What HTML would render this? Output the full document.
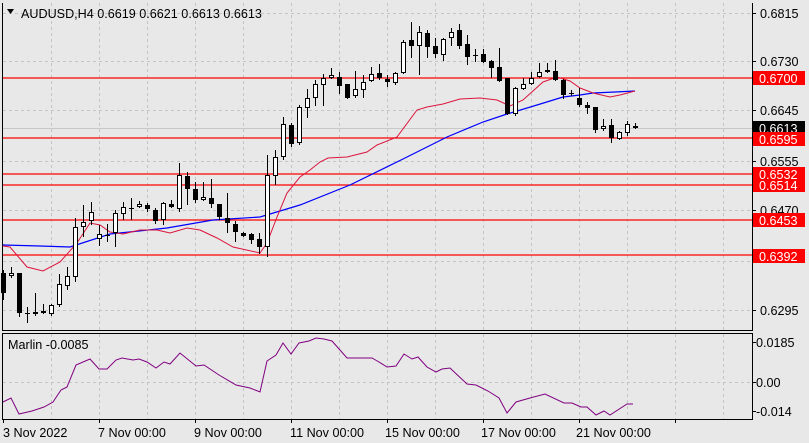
<!DOCTYPE html>
<html><head><meta charset="utf-8">
<style>
html,body{margin:0;padding:0;background:#e8e8e8;}
body{width:809px;height:443px;overflow:hidden;position:relative;font-family:"Liberation Sans",sans-serif;}
svg{position:absolute;left:0;top:0;}
</style></head>
<body>
<svg id="s" width="809" height="443" xmlns="http://www.w3.org/2000/svg" font-family="Liberation Sans, sans-serif" font-size="12.6">
<rect x="0" y="0" width="809" height="443" fill="#e8e8e8"/>
<g id="grid" stroke="#c4c4c4" stroke-dasharray="3,3" stroke-width="1"></g>
<line x1="3" y1="128.5" x2="752" y2="128.5" stroke="#c8c8c8"/>
<g stroke="#ff0000" stroke-width="1.3">
<line x1="3" y1="78" x2="752" y2="78"/>
<line x1="3" y1="138" x2="752" y2="138"/>
<line x1="3" y1="174" x2="752" y2="174"/>
<line x1="3" y1="185" x2="752" y2="185"/>
<line x1="3" y1="220" x2="752" y2="220"/>
<line x1="3" y1="255" x2="752" y2="255"/>
</g>
<polyline fill="none" stroke="#0000ff" stroke-width="1.2" points="3,245 40,246 70,247 110,234 167,228 213,220 260,217 300,205 350,185 403,159 447,137 483,122 507,114 537,105 563,97 580,95 593,93 615,92 635,91"/>
<polyline fill="none" stroke="#dc143c" stroke-width="1" points="3,246 10,247 27,267 43,271 60,262 77,243 90,223 100,225 110,232 123,234 140,230 157,230 170,233 187,228 200,230 217,238 233,247 260,253 267,243 277,217 287,193 300,177 310,170 320,162 328,158 347,157 367,152 377,145 397,137 417,110 427,107 443,104 460,99 480,98 497,100 510,106 523,100 543,82 557,77 570,81 580,88 593,93 610,97 620,95 635,91"/>
<g id="candles"></g>
<polyline fill="none" stroke="#800080" stroke-width="1" points="3,402 11,398 19,414 32,411 44,407 53,402 61,390 67,387 76,365 90,359 99,369 107,369 116,360 122,358 133,360 139,359 147,362 156,368 164,362 170,364 180,353 196,366 204,365 219,375 236,385 250,388 260,392 267,361 276,355 283,343 291,354 299,343 309,341 316,338 324,339 332,341 347,358 358,358 372,358 379,362 387,367 396,366 404,354 412,359 418,357 427,367 436,372 442,369 450,368 467,384 476,385 488,391 499,398 507,413 516,402 530,398 545,394 564,403 572,403 581,407 587,407 596,415 604,411 610,415 627,404 633,404"/>
<g fill="none" stroke="#000" stroke-width="1">
<line x1="2.5" y1="3" x2="2.5" y2="330"/>
<line x1="752.5" y1="3" x2="752.5" y2="330"/>
<line x1="2" y1="330.5" x2="753" y2="330.5"/>
<line x1="2" y1="333.5" x2="753" y2="333.5"/>
<line x1="2.5" y1="333" x2="2.5" y2="419"/>
<line x1="752.5" y1="333" x2="752.5" y2="419"/>
<line x1="2" y1="419.5" x2="753" y2="419.5"/>
</g>
<g id="ticks" stroke="#000"></g>
<polygon points="7,9 14,9 10.5,14" fill="#000"/>
<text x="21" y="18" fill="#000">AUDUSD,H4  0.6619 0.6621 0.6613 0.6613</text>
<text x="8" y="349" fill="#000">Marlin -0.0085</text>
<g fill="#000">
<text x="760" y="18">0.6815</text>
<text x="760" y="66">0.6730</text>
<text x="760" y="115">0.6645</text>
<text x="760" y="166">0.6555</text>
<text x="760" y="215">0.6470</text>
<text x="760" y="315">0.6295</text>
<text x="756" y="347">0.0185</text>
<text x="756" y="387">0.00</text>
<text x="756" y="416">-0.014</text>
</g>
<g>
<rect x="753" y="71" width="52" height="14" fill="#ff0000"/><text x="759" y="83" fill="#fff">0.6700</text>
<rect x="753" y="121" width="52" height="14" fill="#000"/><text x="759" y="133" fill="#fff">0.6613</text>
<rect x="753" y="132" width="52" height="14" fill="#ff0000"/><text x="759" y="144" fill="#fff">0.6595</text>
<rect x="753" y="167" width="52" height="14" fill="#ff0000"/><text x="759" y="179" fill="#fff">0.6532</text>
<rect x="753" y="179" width="52" height="13" fill="#ff0000"/><text x="759" y="190" fill="#fff">0.6514</text>
<rect x="753" y="213" width="52" height="14" fill="#ff0000"/><text x="759" y="225" fill="#fff">0.6453</text>
<rect x="753" y="249" width="52" height="14" fill="#ff0000"/><text x="759" y="261" fill="#fff">0.6392</text>
</g>
<g fill="#000">
<text x="3" y="437">3 Nov 2022</text>
<text x="98" y="437">7 Nov 00:00</text>
<text x="194" y="437">9 Nov 00:00</text>
<text x="290" y="437">11 Nov 00:00</text>
<text x="385" y="437">15 Nov 00:00</text>
<text x="481" y="437">17 Nov 00:00</text>
<text x="576" y="437">21 Nov 00:00</text>
</g>
</svg>
<script>
var NS="http://www.w3.org/2000/svg";
function el(p,t,a){var e=document.createElementNS(NS,t);for(var k in a)e.setAttribute(k,a[k]);p.appendChild(e);return e;}
var g=document.getElementById('grid');
[13,61,110,161,210,261,310].forEach(function(y){el(g,'line',{x1:3,x2:752,y1:y+.5,y2:y+.5});});
el(g,'line',{x1:3,x2:752,y1:382.5,y2:382.5});
for(var x=51;x<752;x+=48){el(g,'line',{x1:x+.5,x2:x+.5,y1:3,y2:330});el(g,'line',{x1:x+.5,x2:x+.5,y1:334,y2:419});}
var tk=document.getElementById('ticks');
[13,61,78,110,128,138,161,174,185,210,220,255,310,342,382,411].forEach(function(y){el(tk,'line',{x1:752,x2:756,y1:y+.5,y2:y+.5});});
for(var x=3;x<752;x+=96){el(tk,'line',{x1:x+.5,x2:x+.5,y1:419,y2:423});}
var D=[
['b',273,293,270,300],['w',273,276,267,278],['b',273,313,273,317],['d',313,313,307,323],['w',312,314,293,316],
['b',311,313,304,314],['w',305,314,304,316],['w',284,305,274,307],['w',276,286,267,290],['w',227,277,218,282],
['w',222,227,205,237],['w',212,221,202,225],['w',234,239,225,246],['d',235,235,224,242],['w',213,233,210,247],
['w',207,214,202,220],['d',208,208,198,220],['w',204,207,201,208],['b',205,209,203,212],['b',210,221,208,224],
['w',203,220,202,225],['b',204,207,200,208],['w',175,209,163,212],['b',176,189,172,205],['b',189,200,182,203],
['w',197,200,182,201],['b',198,204,179,208],['b',204,217,204,220],['b',218,223,193,233],['b',224,232,221,242],
['b',233,236,232,237],['b',234,240,233,244],['b',239,247,233,254],['w',175,247,155,257],['w',157,176,150,185],
['w',124,157,117,160],['b',125,144,123,147],['w',107,143,105,145],['w',98,108,89,118],['w',84,98,80,106],
['w',78,85,74,106],['w',75,78,68,79],['b',77,86,72,94],['b',84,98,84,99],['w',89,96,71,98],
['w',82,90,75,98],['w',74,81,67,82],['b',73,78,64,80],['b',79,82,75,87],['w',73,83,72,85],
['w',42,73,40,74],['b',40,46,22,58],['w',32,46,26,75],['b',33,47,30,58],['b',46,54,38,58],
['w',39,55,38,61],['w',32,38,28,46],['b',30,46,24,49],['b',44,57,35,65],['d',55,55,49,62],
['b',54,62,49,63],['b',61,68,60,78],['b',67,81,48,82],['b',78,114,78,115],['w',88,114,87,116],
['w',84,89,78,90],['w',78,84,72,85],['w',72,77,63,78],['w',70,72,63,73],['b',71,80,60,81],
['b',80,95,79,99],['d',93,93,90,96],['b',98,105,88,107],['b',105,108,102,114],['b',107,130,107,133],
['w',126,129,119,131],['b',125,138,119,143],['w',132,139,131,140],['w',124,133,121,136],['b',126,128,123,129]];
var c=document.getElementById('candles');
D.forEach(function(d,i){var x=3+8*i;
 el(c,'line',{x1:x+.5,x2:x+.5,y1:d[3],y2:d[4],stroke:'#000'});
 if(d[0]=='d'){el(c,'line',{x1:x-2,x2:x+3,y1:d[1]+.5,y2:d[1]+.5,stroke:'#000'});}
 else if(d[0]=='b'){el(c,'rect',{x:x-2,y:d[1],width:5,height:Math.max(1,d[2]-d[1]),fill:'#000'});}
 else{el(c,'rect',{x:x-1.5,y:d[1]+.5,width:4,height:Math.max(1,d[2]-d[1]-1),fill:'#fff',stroke:'#000'});}
});
</script>
</body></html>
